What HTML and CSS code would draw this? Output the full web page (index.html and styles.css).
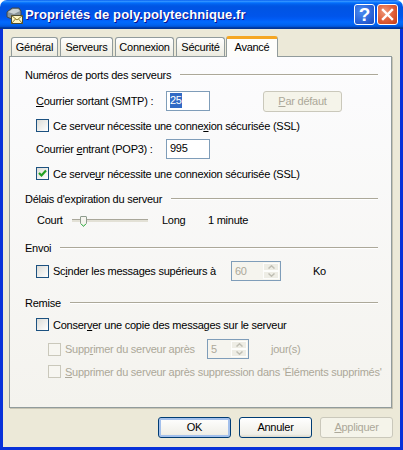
FILE: index.html
```html
<!DOCTYPE html>
<html lang="fr">
<head>
    <meta charset="UTF-8">
    <title>Propriétés de poly.polytechnique.fr</title>
    <link rel="stylesheet" href="styles.css">
</head>
<body>
    <div class="window">
        <div class="titlebar">
            <svg class="title-icon" width="18" height="18" viewBox="0 0 18 18">
                <path d="M2 6 L7 2 H14 L16 5 V10 L9 14 L2 11 Z" fill="#8a9499" stroke="#3c464c" stroke-width="1"/>
                <path d="M3 6 L8 3 H13 L15 5 L9 8 Z" fill="#c9d1d3"/>
                <rect x="6.5" y="9.5" width="11" height="8" fill="#fdf6c4" stroke="#4a4a30"/>
                <path d="M6.5 9.5 L12 14 L17.5 9.5 M6.5 17.5 L10.5 13 M17.5 17.5 L13.5 13" fill="none" stroke="#8a7a30"/>
            </svg>
            <span class="title-text">Propriétés de poly.polytechnique.fr</span>
            <div class="title-help">?</div>
            <div class="title-close">
                <svg width="13" height="13" viewBox="0 0 13 13">
                    <path d="M2 2 L11 11 M11 2 L2 11" stroke="#fff" stroke-width="2.4" stroke-linecap="square"/>
                </svg>
            </div>
        </div>
        <div class="client">
            <div class="tabs">
                <div class="tab">Général</div>
                <div class="tab">Serveurs</div>
                <div class="tab">Connexion</div>
                <div class="tab">Sécurité</div>
                <div class="tab active">Avancé</div>
            </div>
            <div class="panel">
                <div class="heading h1"><span>Numéros de ports des serveurs</span></div>
                <div class="row r-smtp">
                    <label class="port-label"><u>C</u>ourrier sortant (SMTP) :</label>
                    <div class="input"><span class="selected">25</span></div>
                    <div class="btn disabled small"><span><u>P</u>ar défaut</span></div>
                </div>
                <div class="row check-row r-c1">
                    <span class="check"></span>
                    <label>Ce serveur nécessite une conne<u>x</u>ion sécurisée (SSL)</label>
                </div>
                <div class="row r-pop">
                    <label class="port-label">Courrier <u>e</u>ntrant (POP3) :</label>
                    <div class="input">995</div>
                </div>
                <div class="row check-row r-c2">
                    <span class="check">
                        <svg width="11" height="11" viewBox="0 0 11 11">
                            <path d="M2 5 L4.5 7.5 L9 2.5" fill="none" stroke="#21a121" stroke-width="2.2"/>
                        </svg>
                    </span>
                    <label>Ce serve<u>u</u>r nécessite une connexion sécurisée (SSL)</label>
                </div>

                <div class="heading h2"><span>Délais d'expiration du serveur</span></div>
                <div class="row r-slider">
                    <label class="court">Court</label>
                    <div class="slider">
                        <svg class="thumb" width="7" height="11" viewBox="0 0 7 11">
                            <path d="M.5 1 Q.5 .5 1 .5 H6 Q6.5 .5 6.5 1 V7.5 L3.5 10.5 L.5 7.5 Z" fill="#f5f4ee" stroke="#8e9c8e"/>
                            <path d="M1 8 L3.5 10 L6 8" fill="none" stroke="#3fc050"/>
                        </svg>
                    </div>
                    <label class="long">Long</label>
                    <label>1 minute</label>
                </div>

                <div class="heading h3"><span>Envoi</span></div>
                <div class="row check-row r-split">
                    <span class="check"></span>
                    <label class="split-label">Sc<u>i</u>nder les messages supérieurs à</label>
                    <div class="spinner split-spin">
                        <span>60</span>
                        <div class="spin-btns">
                            <div class="spin-btn"><svg width="7" height="4" viewBox="0 0 7 4"><path d="M.5 3.5 L3.5 .8 L6.5 3.5" fill="none" stroke="#c0bfb4" stroke-width="1.5"/></svg></div>
                            <div class="spin-btn"><svg width="7" height="4" viewBox="0 0 7 4"><path d="M.5 .5 L3.5 3.2 L6.5 .5" fill="none" stroke="#c0bfb4" stroke-width="1.5"/></svg></div>
                        </div>
                    </div>
                    <label class="ko">Ko</label>
                </div>

                <div class="heading h4"><span>Remise</span></div>
                <div class="row check-row r-keep">
                    <span class="check"></span>
                    <label>Conser<u>v</u>er une copie des messages sur le serveur</label>
                </div>
                <div class="row check-row sub r-sub1">
                    <span class="check off"></span>
                    <label class="off-text sub-label">Supp<u>r</u>imer du serveur après</label>
                    <div class="spinner sub-spin">
                        <span>5</span>
                        <div class="spin-btns">
                            <div class="spin-btn"><svg width="7" height="4" viewBox="0 0 7 4"><path d="M.5 3.5 L3.5 .8 L6.5 3.5" fill="none" stroke="#c0bfb4" stroke-width="1.5"/></svg></div>
                            <div class="spin-btn"><svg width="7" height="4" viewBox="0 0 7 4"><path d="M.5 .5 L3.5 3.2 L6.5 .5" fill="none" stroke="#c0bfb4" stroke-width="1.5"/></svg></div>
                        </div>
                    </div>
                    <label class="off-text days">jour(s)</label>
                </div>
                <div class="row check-row sub r-sub2">
                    <span class="check off"></span>
                    <label class="off-text"><u>S</u>upprimer du serveur après suppression dans 'Éléments supprimés'</label>
                </div>
            </div>
            <div class="buttons">
                <div class="btn default">OK</div>
                <div class="btn">Annuler</div>
                <div class="btn disabled"><span><u>A</u>ppliquer</span></div>
            </div>
        </div>
    </div>
</body>
</html>
```

FILE: styles.css
```css
html, body {
    margin: 0;
    padding: 0;
    overflow: hidden;
    background-color: #fff;
}
.window {
    width: 403px;
    height: 450px;
    display: flex;
    flex-direction: column;
    font-family: "Liberation Sans", sans-serif;
    font-size: 11px;
    letter-spacing: -.25px;
    color: #000;
}
label {
    white-space: nowrap;
}

/* title bar */
.titlebar {
    height: 29px;
    flex: none;
    display: flex;
    align-items: center;
    border-radius: 7px 7px 0 0;
    background: linear-gradient(#0058ee 0%, #3593ff 4%, #288eff 6%, #127dff 8%, #036ffc 10%, #0262ee 14%, #0057e5 20%, #0054e3 24%, #0055eb 56%, #005bf5 66%, #026afe 76%, #0062ef 86%, #0052d6 92%, #0040ab 94%, #003092 100%);
}
.title-icon {
    margin-left: 5px;
    flex: none;
}
.title-text {
    margin-left: 2px;
    width: 330px;
    color: #fff;
    font-family: "Liberation Sans", sans-serif;
    font-weight: bold;
    font-size: 13px;
    letter-spacing: .1px;
    white-space: nowrap;
    text-shadow: 1px 1px #0f1089;
}
.title-help, .title-close {
    width: 21px;
    height: 21px;
    box-sizing: border-box;
    border: 1px solid #fff;
    border-radius: 3px;
    flex: none;
    display: flex;
    align-items: center;
    justify-content: center;
}
.title-help {
    margin-left: -1px;
    color: #fff;
    font-family: "Liberation Sans", sans-serif;
    font-weight: bold;
    font-size: 19px;
    background: radial-gradient(circle at 35% 35%, #4d8cf0 0%, #2a63d8 60%, #1a47b8 100%);
}
.title-close {
    margin-left: 2px;
    background: radial-gradient(circle at 35% 35%, #ee9a7c 0%, #e0603a 50%, #c43a14 100%);
}

/* dialog body */
.client {
    flex: 1;
    display: flex;
    flex-direction: column;
    background-color: #ece9d8;
    border: solid #0831d9;
    border-width: 0 3px 3px 3px;
    padding: 7px 8px 0 6px;
}
.tabs {
    display: flex;
    align-items: flex-end;
    height: 20px;
    padding-left: 2px;
    gap: 2px;
}
.tab {
    height: 19px;
    box-sizing: border-box;
    text-align: center;
    line-height: 18px;
    border: 1px solid #919b9c;
    border-bottom: none;
    border-radius: 3px 3px 0 0;
    background: linear-gradient(#fff, #ecebe0);
}
.tab:nth-child(1) { width: 47px; }
.tab:nth-child(2) { width: 53px; }
.tab:nth-child(3) { width: 59px; }
.tab:nth-child(4) { width: 49px; }
.tab.active {
    width: 52px;
    height: 21px;
    margin-left: -1px;
    margin-bottom: -1px;
    z-index: 1;
    line-height: 17px;
    background: #fdfdfb;
    border-top: 3px solid #f5a623;
}
.panel {
    height: 352px;
    box-sizing: border-box;
    border: 1px solid #919b9c;
    box-shadow: 1px 1px 0 #c8c5b4;
    background: linear-gradient(#fcfcfe, #f4f3ee);
    padding: 10px 13px 0 15px;
}

/* section headings */
.heading {
    height: 16px;
    display: flex;
    align-items: center;
    gap: 9px;
}
.heading span {
    white-space: nowrap;
}
.heading::after {
    content: "";
    flex: 1;
    height: 1px;
    background-color: #aca899;
    border-bottom: 1px solid #fff;
}
.h2 { margin-top: 11px; }
.h3 { margin-top: 12px; }
.h4 { margin-top: 14px; }

/* rows */
.row {
    display: flex;
    align-items: center;
    margin-left: 11px;
}
.check-row {
    gap: 4px;
    height: 13px;
}
.r-smtp { height: 20px; margin-top: 8px; }
.r-c1 { margin-top: 8px; }
.r-pop { height: 20px; margin-top: 7px; }
.r-c2 { margin-top: 8px; }
.r-slider { height: 16px; margin-top: 5px; }
.r-split { height: 20px; margin-top: 5px; }
.r-keep { margin-top: 7px; }
.sub { margin-left: 23px; }
.r-sub1 { height: 20px; margin-top: 8px; }
.r-sub2 { margin-top: 6px; }

.port-label {
    width: 130px;
}
.input {
    width: 44px;
    height: 20px;
    box-sizing: border-box;
    border: 1px solid #7f9db9;
    background-color: #fff;
    padding: 0 3px;
    line-height: 17px;
}
.selected {
    background-color: #316ac5;
    color: #fff;
    display: inline-block;
    height: 15px;
    line-height: 14px;
    vertical-align: top;
    margin-top: 1px;
}

.check {
    width: 13px;
    height: 13px;
    box-sizing: border-box;
    flex: none;
    border: 1px solid #1c5180;
    background: linear-gradient(135deg, #dcdcd7, #fff);
    display: flex;
    align-items: center;
    justify-content: center;
}
.check.off {
    border-color: #cac8bb;
    background: #f7f6f1;
}
.off-text {
    color: #aca899;
}

/* slider */
.court { width: 35px; margin-left: 1px; }
.long { width: 46px; }
.slider {
    position: relative;
    width: 76px;
    height: 3px;
    margin-right: 14px;
    background-color: #e3e1d6;
    border-top: 1px solid #a9a79a;
    box-sizing: border-box;
}
.thumb {
    position: absolute;
    left: 8px;
    top: -4px;
}

/* spinners */
.split-label { width: 174px; }
.sub-label { width: 138px; }
.spinner {
    height: 20px;
    box-sizing: border-box;
    border: 1px solid #7f9db9;
    display: flex;
    justify-content: space-between;
    color: #aca899;
    line-height: 18px;
    padding-left: 3px;
    background-color: #f5f4ee;
}
.split-spin { width: 50px; }
.sub-spin { width: 42px; }
.spin-btns {
    width: 16px;
    margin: 1px;
    display: flex;
    flex-direction: column;
}
.spin-btn {
    flex: 1;
    display: flex;
    align-items: center;
    justify-content: center;
    background-color: #eeede5;
    border: 1px solid #fdfdfb;
    box-sizing: border-box;
}
.ko { margin-left: 28px; }
.days { margin-left: 18px; }

/* push buttons */
.buttons {
    display: flex;
    justify-content: flex-end;
    gap: 8px;
    margin-top: 9px;
    margin-right: -1px;
}
.btn {
    width: 73px;
    height: 21px;
    box-sizing: border-box;
    text-align: center;
    line-height: 19px;
    border: 1px solid #003c74;
    border-radius: 3px;
    background: linear-gradient(#fff, #f0efe8 85%, #dcd8ca);
}
.btn.default {
    box-shadow: inset 0 0 0 2px #a3c0ec;
}
.btn.disabled {
    border-color: #cac8bb;
    background: #f5f4ea;
    color: #aca899;
}
.btn.small {
    width: 79px;
    margin-left: 53px;
}
```
